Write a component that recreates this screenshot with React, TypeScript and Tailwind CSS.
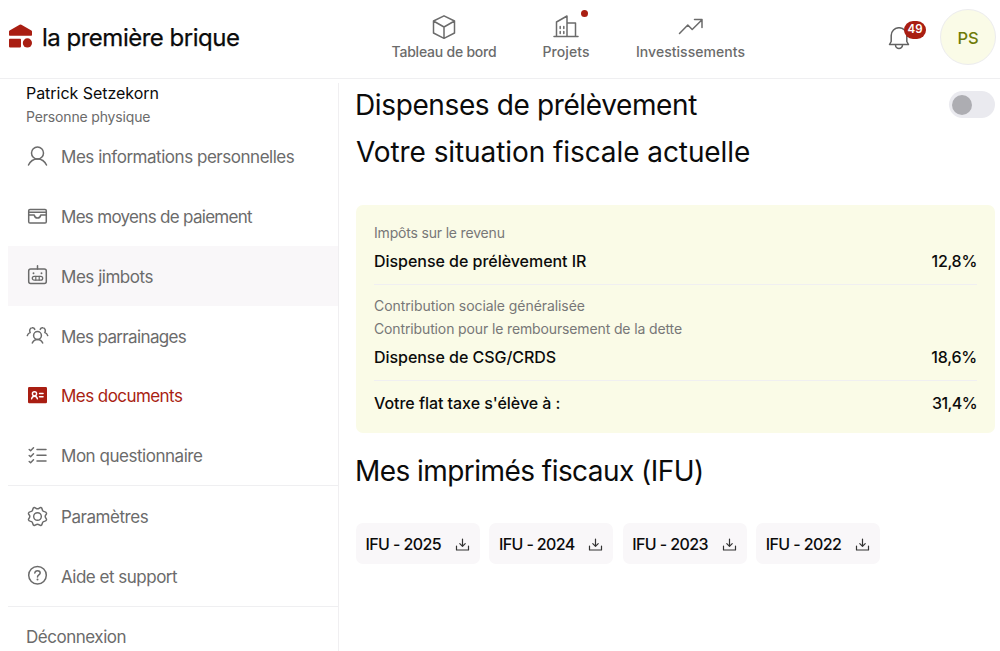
import type { ReactNode } from "react";

type Item = {
  label: string;
  icon: ReactNode;
  tracking: string;
  state?: "hover" | "active";
};

const accountItems: Item[] = [
  { label: "Mes informations personnelles", icon: <UserIcon />, tracking: "tracking-[-0.47px]" },
  { label: "Mes moyens de paiement", icon: <WalletIcon />, tracking: "tracking-[-0.7px]" },
  { label: "Mes jimbots", icon: <RobotIcon />, tracking: "tracking-[-0.47px]", state: "hover" },
  { label: "Mes parrainages", icon: <GroupIcon />, tracking: "tracking-[-0.64px]" },
  { label: "Mes documents", icon: <IdCardIcon />, tracking: "tracking-[-0.56px]", state: "active" },
  { label: "Mon questionnaire", icon: <ChecklistIcon />, tracking: "tracking-[-0.47px]" },
];

const settingsItems: Item[] = [
  { label: "Paramètres", icon: <GearIcon />, tracking: "tracking-[-0.45px]" },
  { label: "Aide et support", icon: <HelpIcon />, tracking: "tracking-[-0.5px]" },
];

const years = [2025, 2024, 2023, 2022];

export default function App() {
  return (
    <div className="flex h-[651px] w-[1000px] flex-col overflow-hidden bg-white font-['Inter',sans-serif] text-[#0b0b0b]">
      <Header />
      <div className="flex min-h-0 flex-1">
        <Sidebar />
        <main className="flex-1 pl-[17px] pr-[5px]">
          <div className="flex h-[51px] items-center justify-between">
            <h1 className="-ml-[1px] text-[28px] tracking-[-0.38px]">Dispenses de prélèvement</h1>
            <Toggle />
          </div>
          <h2 className="mt-[1px] text-[28px] leading-[42px] tracking-[-0.08px]">Votre situation fiscale actuelle</h2>
          <TaxCard />
          <h2 className="mt-[17px] -ml-[1px] text-[28px] leading-[42px] tracking-[-0.55px]">Mes imprimés fiscaux (IFU)</h2>
          <div className="mt-[31px] flex gap-[9.4px]">
            {years.map((year) => (
              <button
                key={year}
                className="flex h-[41px] w-[124px] items-center justify-between rounded-[7px] bg-[#f9f7f9] px-[10px] text-base font-medium"
              >
                <span className="-ml-[0.5px] whitespace-nowrap tracking-[-0.6px]">IFU - {year}</span>
                <DownloadIcon />
              </button>
            ))}
          </div>
        </main>
      </div>
    </div>
  );
}

function Header() {
  return (
    <header className="flex h-[79px] shrink-0 items-center border-b border-[#efeff1]">
      <div className="flex w-[392px] items-center pl-[9px]">
        <LogoIcon />
        <span className="ml-[9px] mt-[-2px] whitespace-nowrap text-[24px] tracking-[-0.5px] [-webkit-text-stroke:0.25px]">
          la première brique
        </span>
      </div>
      <nav className="flex gap-[46px] text-sm font-medium text-[#6b6b6b]">
        <NavItem label="Tableau de bord" width="w-[104px]" tracking="tracking-[-0.22px]" icon={<CubeIcon />} />
        <NavItem label="Projets" width="w-[48px]" tracking="tracking-[0.07px]" icon={<BuildingIcon />} dot />
        <NavItem label="Investissements" width="w-[109px]" tracking="tracking-[0.04px]" icon={<TrendIcon />} />
      </nav>
      <div className="ml-auto flex items-center pr-[4px]">
        <div className="relative mr-[30px]">
          <BellIcon />
          <span className="absolute -top-[6px] left-[16px] grid h-[18px] w-[22px] place-items-center rounded-full bg-[#a91e12] text-[11.5px] font-semibold text-white">
            49
          </span>
        </div>
        <div className="mt-[-4px] grid h-[56px] w-[56px] place-items-center rounded-full border border-[#ececee] bg-[#fafbe7] pt-[2px] text-[16.5px] font-medium text-[#6f7b08]">
          PS
        </div>
      </div>
    </header>
  );
}

type NavItemProps = { label: string; width: string; tracking: string; icon: ReactNode; dot?: boolean };

function NavItem({ label, width, tracking, icon, dot }: NavItemProps) {
  return (
    <a className={`flex flex-col items-center ${width}`}>
      <span className="relative mt-[-2px]">
        {icon}
        {dot && <span className="absolute -top-[4px] left-[28px] h-[7px] w-[7px] rounded-full bg-[#a91e12]" />}
      </span>
      <span className={`mt-[1px] whitespace-nowrap leading-[22px] ${tracking}`}>{label}</span>
    </a>
  );
}

function Sidebar() {
  return (
    <aside className="ml-[8px] mt-[4px] w-[331px] shrink-0 border-r border-[#f0eff1] text-[17px] text-[#6b6b6b]">
      <div className="h-[43.5px] pl-[18px]">
        <p className="text-base leading-[21px] tracking-[-0.04px] text-[#0b0b0b]">Patrick Setzekorn</p>
        <p className="mt-[2px] text-sm leading-[22px] tracking-[-0.16px]">Personne physique</p>
      </div>
      <ul className="border-b border-[#efeff1]">
        {accountItems.map((item) => (
          <MenuRow key={item.label} item={item} />
        ))}
      </ul>
      <ul className="border-b border-[#efeff1]">
        {settingsItems.map((item) => (
          <MenuRow key={item.label} item={item} />
        ))}
      </ul>
      <p className="pl-[18px] leading-[60px] tracking-[-0.48px]">Déconnexion</p>
    </aside>
  );
}

function MenuRow({ item }: { item: Item }) {
  const bg = item.state === "hover" ? "bg-[#f9f7f9]" : "";
  const color = item.state === "active" ? "text-[#a91e12]" : "";
  return (
    <li className={`flex h-[59.8px] items-center gap-[12px] pl-[18px] ${bg} ${color}`}>
      {item.icon}
      <span className={`mt-[3px] whitespace-nowrap ${item.tracking}`}>{item.label}</span>
    </li>
  );
}

function Toggle() {
  return (
    <span className="flex h-[27px] w-[46px] items-center rounded-full bg-[#eaeaef] pl-[3px]">
      <span className="h-[20px] w-[20px] rounded-full bg-[#adadb2]" />
    </span>
  );
}

function TaxCard() {
  return (
    <section className="mt-[32px] h-[228px] rounded-[7px] bg-[#fafbe7] px-[18px] pt-[16px] font-medium">
      <div className="h-[64px] border-b border-[#f0eff1]">
        <p className="text-sm font-normal leading-[23px] tracking-[-0.18px] text-[#777]">Impôts sur le revenu</p>
        <div className="mt-[6px] flex justify-between leading-[23px]">
          <span className="tracking-[-0.03px]">Dispense de prélèvement IR</span>
          <span className="tracking-[-0.3px]">12,8%</span>
        </div>
      </div>
      <div className="h-[96px] border-b border-[#f0eff1] pt-[9px]">
        <p className="text-sm font-normal leading-[23px] tracking-[-0.07px] text-[#777]">Contribution sociale généralisée</p>
        <p className="text-sm font-normal leading-[23px] tracking-[-0.13px] text-[#777]">
          Contribution pour le remboursement de la dette
        </p>
        <div className="mt-[6px] flex justify-between leading-[23px]">
          <span className="tracking-[-0.04px]">Dispense de CSG/CRDS</span>
          <span className="tracking-[-0.2px]">18,6%</span>
        </div>
      </div>
      <div className="mt-[11px] flex justify-between leading-[23px]">
        <span className="tracking-[-0.04px]">Votre flat taxe s'élève à :</span>
        <span className="tracking-[-0.6px]">31,4%</span>
      </div>
    </section>
  );
}

/* ------- Icons ------- */

function LogoIcon() {
  return (
    <svg width="24" height="24" viewBox="0 0 24 24" className="mt-[-6px]" fill="#a91e12">
      <path d="M10.600.8a1.900 1.900 0 0 1 1.800 0l10 5.800a1.200 1.200 0 0 1 .6 1v3.400a.7.7 0 0 1-.7.7H.7A.7.7 0 0 1 0 11V7.600a1.200 1.200 0 0 1 .6-1Z" />
      <rect x="0" y="14.800" width="12" height="8.600" rx=".8" />
      <circle cx="18.400" cy="18.900" r="4.600" />
    </svg>
  );
}

function CubeIcon() {
  return (
    <svg width="26" height="26" viewBox="0 0 26 26" fill="none" stroke="currentColor" strokeWidth="1.5" strokeLinejoin="round">
      <path d="M13 1.800 23.500 7v12L13 24.300 2.500 19V7ZM2.500 7 13 13l10.500-6M13 13v11.300" />
    </svg>
  );
}

function BuildingIcon() {
  return (
    <svg width="26" height="26" viewBox="0 0 26 26" fill="none" stroke="currentColor" strokeWidth="1.5" strokeLinecap="round" strokeLinejoin="round">
      <path d="M1 22.500h24M3.500 22.500V8L14 2v20.500M14 9h8.500v13.500" />
      <path d="M7.200 12.500v2M10.800 12.500v2M7.200 17.500v2M10.800 17.500v2" />
    </svg>
  );
}

function TrendIcon() {
  return (
    <svg width="26" height="26" viewBox="0 0 26 26" fill="none" stroke="currentColor" strokeWidth="1.5" strokeLinecap="round" strokeLinejoin="round">
      <path d="m1.500 19.500 8.300-8.500 4.400 4.500L23.800 6M16.500 5.500H24v8" />
    </svg>
  );
}

function BellIcon() {
  return (
    <svg width="22" height="24" viewBox="0 0 22 24" fill="none" stroke="#626262" strokeWidth="1.500" strokeLinejoin="round">
      <path d="M1.500 17.500 3.200 14.500V8.500a7.800 7.800 0 0 1 15.600 0v6l1.700 3ZM7.500 18a3.300 3.300 0 0 0 7 0" />
    </svg>
  );
}

function UserIcon() {
  return (
    <svg width="23" height="23" viewBox="0 0 23 23" fill="none" stroke="currentColor" strokeWidth="1.500" strokeLinecap="round">
      <circle cx="11.500" cy="8" r="6" />
      <path d="M2.500 20c1.800-3.800 5-6 9-6s7.200 2.200 9 6" />
    </svg>
  );
}

function WalletIcon() {
  return (
    <svg width="23" height="23" viewBox="0 0 23 23" fill="none" stroke="currentColor" strokeWidth="1.500" strokeLinejoin="round">
      <rect x="2.700" y="4.500" width="17.600" height="13.600" rx="1.300" />
      <path d="M2.700 7.200h17.600M2.700 10h5.500c.4 2 1.500 3 3.300 3s2.900-1 3.300-3h5.500" />
    </svg>
  );
}

function RobotIcon() {
  return (
    <svg width="23" height="23" viewBox="0 0 23 23" fill="none" stroke="currentColor" strokeWidth="1.500" strokeLinecap="round">
      <rect x="2.700" y="5" width="17.600" height="14.500" rx="2" />
      <path d="M11.500 5V1.800" />
      <rect x="6.300" y="12.300" width="10.400" height="3.800" rx="1.900" strokeWidth="1.300" />
      <path d="M9.800 12.300v3.800M13.200 12.300v3.800" strokeWidth="1.200" />
      <path d="M7.500 9.200h.01M15.500 9.200h.01" strokeWidth="1.900" />
    </svg>
  );
}

function GroupIcon() {
  return (
    <svg width="23" height="23" viewBox="0 0 23 23" fill="none" stroke="currentColor" strokeWidth="1.500" strokeLinecap="round" strokeLinejoin="round">
      <circle cx="11.500" cy="11.500" r="3.900" />
      <path d="M6.300 19c1-2.300 2.700-3.600 5.200-3.600s4.200 1.300 5.200 3.600" />
      <path d="M1.300 11.600c.5-1.700 1.400-2.600 2.900-3C3 6.400 4 4 6 3.800c1.200-.2 2.300.4 2.800 1.600M21.700 11.600c-.5-1.700-1.400-2.600-2.900-3C20 6.400 19 4 17 3.800c-1.200-.2-2.300.4-2.800 1.600" />
    </svg>
  );
}

function IdCardIcon() {
  return (
    <svg width="23" height="23" viewBox="0 0 23 23" fill="none">
      <rect x="2" y="3" width="19" height="16.300" rx="1.200" fill="currentColor" />
      <g stroke="#fff" strokeWidth="1.400" strokeLinecap="round">
        <circle cx="8.500" cy="9.800" r="2.100" />
        <path d="M5.600 14.800c.4-1.800 1.300-2.600 2.900-2.600s2.500.8 2.900 2.600M13.500 9.500h3.600M13.500 12.700h3.600" />
      </g>
    </svg>
  );
}

function ChecklistIcon() {
  return (
    <svg width="23" height="23" viewBox="0 0 23 23" fill="none" stroke="currentColor" strokeWidth="1.500" strokeLinecap="round" strokeLinejoin="round">
      <path d="m3.200 5.500 1.400 1.200L7.500 3.800M3.200 11.500l1.400 1.200 2.900-2.900M3.200 17.500l1.400 1.200 2.900-2.900M11 5.500h9M11 11.200h9M11 17h9" />
    </svg>
  );
}

function GearIcon() {
  return (
    <svg width="23" height="23" viewBox="0 0 24 24" fill="none" stroke="currentColor" strokeWidth="1.500" strokeLinejoin="round">
      <circle cx="12" cy="12" r="4" />
      <path d="M8.500 2.600c1.200-.3 1.900 1.400 3.500 1.400s2.300-1.700 3.500-1.400c1.900.6 1.100 2.800 2.200 3.700s3.300.3 3.700 2.200c.3 1.400-1.400 1.900-1.400 3.500s1.700 2.100 1.400 3.500c-.4 1.900-2.600 1.300-3.700 2.200s-.3 3.100-2.200 3.700c-1.200.3-1.900-1.400-3.500-1.400s-2.300 1.700-3.500 1.400c-1.900-.6-1.100-2.800-2.200-3.700s-3.300-.3-3.700-2.200C2.300 14.100 4 13.600 4 12s-1.700-2.100-1.400-3.500c.4-1.900 2.600-1.300 3.700-2.200s.3-3.100 2.200-3.700Z" />
    </svg>
  );
}

function HelpIcon() {
  return (
    <svg width="23" height="23" viewBox="0 0 23 23" fill="none" stroke="currentColor" strokeWidth="1.500" strokeLinecap="round">
      <circle cx="11.500" cy="11.200" r="8.800" />
      <path d="M8.800 9c.2-1.600 1.200-2.300 2.700-2.300s2.700.9 2.700 2.300c0 1.900-2.700 1.900-2.700 3.900" />
      <path d="M11.500 15.600h.01" strokeWidth="2" />
    </svg>
  );
}

function DownloadIcon() {
  return (
    <svg width="15" height="16" viewBox="0 0 15 16" fill="none" stroke="#333" strokeWidth="1.200" strokeLinecap="round" strokeLinejoin="round">
      <path d="M1.500 10v4h12v-4M7.500 3v7.200M4.800 7.600l2.700 2.700 2.700-2.700" />
    </svg>
  );
}
